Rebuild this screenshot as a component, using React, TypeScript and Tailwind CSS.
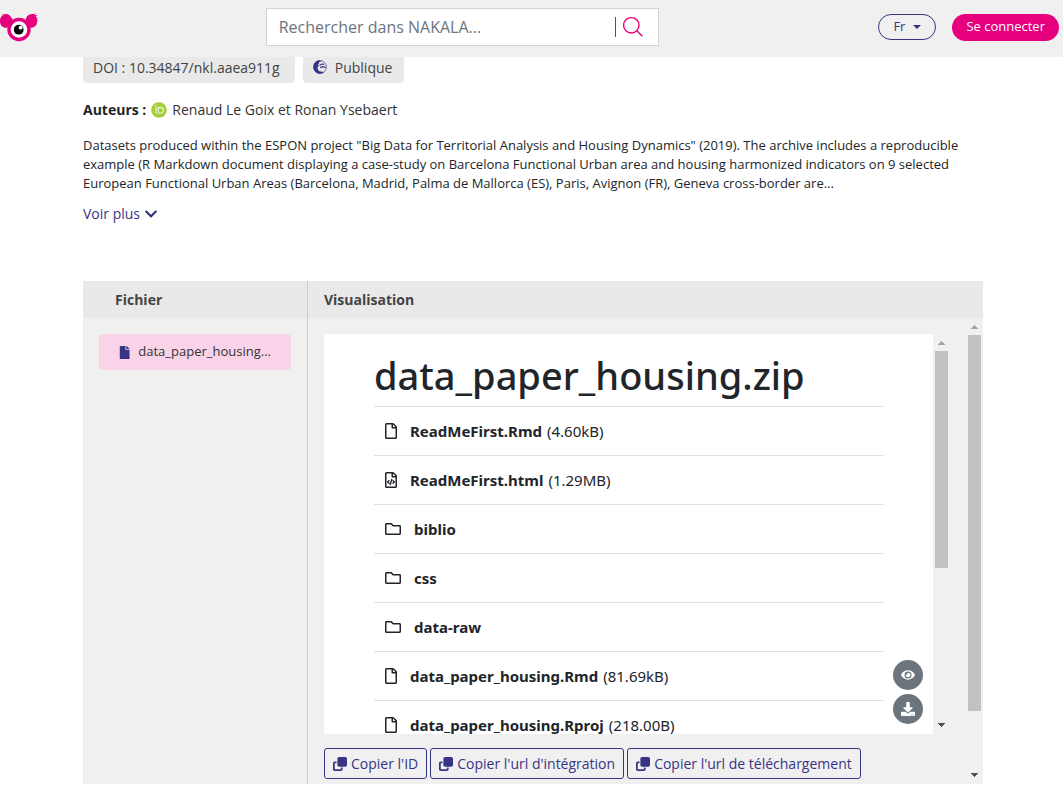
import React from "react";
import { FaFile, FaEye, FaDownload, FaRegFile, FaRegFileCode, FaRegFolder, FaChevronDown, FaOrcid } from "react-icons/fa";
import { FaClone } from "react-icons/fa6";

type Kind = "file" | "code" | "folder";

const entries: { kind: Kind; name: string; size?: string }[] = [
  { kind: "file", name: "ReadMeFirst.Rmd", size: "4.60kB" },
  { kind: "code", name: "ReadMeFirst.html", size: "1.29MB" },
  { kind: "folder", name: "biblio" },
  { kind: "folder", name: "css" },
  { kind: "folder", name: "data-raw" },
  { kind: "file", name: "data_paper_housing.Rmd", size: "81.69kB" },
  { kind: "file", name: "data_paper_housing.Rproj", size: "218.00B" },
];

const icons = {
  file: <FaRegFile className="h-4 w-3 shrink-0" />,
  code: <FaRegFileCode className="h-4 w-3 shrink-0" />,
  folder: <FaRegFolder className="size-4 shrink-0" />,
};

function Logo() {
  return (
    <svg viewBox="0 0 40 30" className="h-[30px] w-10" role="img" aria-label="Nakala">
      <g fill="#e6007e">
        <path d="M0 9C0 5 2 4 3 3L1 3C3 2 5 2 6 2.500L5 1.800C8 2 10 3 11 5C13 7 13 9 12 11C10 15 7 16.500 4 15.500C1 14.500 0 12 0 9Z" />
        <path d="M26 9C25 5 29 1.500 33 2L36 1.500L34.500 3L38 3.500L35.500 4.500L38.500 7L36.500 6.500L38 9.500L36.800 9C38 13 34 16.500 30 15.500C27 14 26 12 26 9Z" />
        <circle cx="19" cy="17.500" r="11.700" />
      </g>
      <circle cx="19" cy="17.500" r="8.300" fill="#fff" />
      <circle cx="18.700" cy="17.700" r="4.900" fill="#0a0a0a" />
      <circle cx="20.600" cy="15.700" r="1.900" fill="#fff" />
    </svg>
  );
}

function Globe() {
  return (
    <svg viewBox="0 0 14 14" className="mt-[3px] size-[14px] shrink-0" aria-hidden="true">
      <circle cx="7" cy="7" r="6.400" fill="#e9e9e9" stroke="#6f6ea3" strokeWidth="1" />
      <path fill="#373583" d="M7 0.300C3.200 0.300 0.400 3.200 0.400 7S3.300 13.700 7 13.700C8.700 13.700 10 13.200 11 12.300L8.600 11.600C6.400 11.700 4.800 10.200 4.600 8.200C4.500 6.800 5.300 6 6 5.500L4.800 4.600L6.300 3.200L5.800 2.200L8.200 1.200Z" />
      <path d="M6.500 5.500l2.300-1.500 2.500 0.300M7 7.700l2.500-1 3 0.700" fill="none" stroke="#373583" strokeWidth="1.200" />
    </svg>
  );
}

function ScrollTrack({ thumb }: { thumb: string }) {
  return (
    <div aria-hidden="true" className="flex w-[17px] shrink-0 flex-col items-center bg-[#f0f0f0]">
      <svg viewBox="0 0 7 4" className="mt-[7px] mb-[6px] h-1 w-[7px] shrink-0" fill="#a3a3a3" shapeRendering="crispEdges">
        <path d="M3 0h1v1h1v1h1v1h1v1H0V3h1V2h1V1h1z" />
      </svg>
      <div className={thumb} />
      <svg viewBox="0 0 7 4" className="mt-auto mb-[7px] h-1 w-[7px] shrink-0" fill="#505050" shapeRendering="crispEdges">
        <path d="M0 0h7v1H6v1H5v1H4v1H3V3H2V2H1V1H0z" />
      </svg>
    </div>
  );
}

export default function App() {
  return (
    <div className="min-h-screen bg-white font-['Open_Sans',sans-serif] text-[#212529]">
      <header className="flex h-[57px] items-center justify-between bg-[#f0f0f0] pr-1 pb-[3px]">
        <a href="#accueil" className="w-[46px]"><Logo /></a>
        <form className="flex h-[38px] w-[393px] items-center border border-[#d4d4d4] bg-white pr-[14px]">
          <input aria-label="Rechercher" placeholder="Rechercher dans NAKALA..." className="min-w-0 flex-1 px-3 text-base outline-none placeholder:text-[#6c757d]" />
          <span className="h-5 w-px bg-[#e6007e]" />
          <button type="button" aria-label="Lancer la recherche" className="ml-[6px]">
            <svg viewBox="0 0 22 22" className="size-[22px]" fill="none" stroke="#e6007e" strokeWidth="1.400">
              <circle cx="9.300" cy="9.300" r="7.700" />
              <path d="M14.800 14.800l5.500 5.500" />
            </svg>
          </button>
        </form>
        <div className="flex items-center gap-4">
          <button className="flex h-[26px] items-center gap-2 rounded-full border border-[#373583] px-[14px] text-[13px] text-[#373583]">
            Fr
            <svg viewBox="0 0 8 4" className="h-1 w-2" fill="currentColor" aria-hidden="true"><path d="M0 0h8L4 4z" /></svg>
          </button>
          <button className="h-[27px] rounded-full bg-[#e6007e] px-[14px] text-[13px] text-white">Se connecter</button>
        </div>
      </header>

      <main className="pr-20 pb-4 pl-[83px]">
        <div className="flex gap-2 text-sm text-[#444]">
          <span className="h-[26px] rounded-b bg-[#e9e9e9] pr-[15px] pl-[10px] leading-[22px]">DOI : 10.34847/nkl.aaea911g</span>
          <span className="flex h-[26px] gap-2 rounded-b bg-[#e9e9e9] pr-3 pl-[10px] leading-[22px]">
            <Globe />
            Publique
          </span>
        </div>
        <p className="mt-4 flex items-center gap-[5px] text-sm leading-[22px]">
          <b>Auteurs :</b>
          <FaOrcid className="size-4 text-[#a6ce39]" />
          <span className="text-[#333]">Renaud Le Goix et Ronan Ysebaert</span>
        </p>
        <p className="mt-[15px] text-[13px] leading-[19px]">
          Datasets produced within the ESPON project "Big Data for Territorial Analysis and Housing Dynamics" (2019). The archive includes a reproducible example (R Markdown document displaying a case-study on Barcelona Functional Urban area and housing harmonized indicators on 9 selected European Functional Urban Areas (Barcelona, Madrid, Palma de Mallorca (ES), Paris, Avignon (FR), Geneva cross-border are...
        </p>
        <button className="mt-[11px] flex items-center gap-1 text-sm leading-5 text-[#373583]">
          Voir plus <FaChevronDown className="size-[14px]" />
        </button>

        <section className="mt-[57px] flex bg-[#f0f0f0]">
          <aside className="w-[225px] shrink-0 border-r border-[#ccc]">
            <h2 className="h-[37px] bg-[#e9e9e9] pl-8 text-sm leading-[37px] font-bold text-[#444]">Fichier</h2>
            <div className="p-4">
              <button className="flex h-9 w-full items-center gap-2 rounded bg-[#fbd3e9] px-5 text-[13px] text-[#333]">
                <FaFile className="h-[13px] w-3 text-[#373583]" />
                data_paper_housing...
              </button>
            </div>
          </aside>
          <div className="min-w-0 flex-1">
            <h2 className="h-[37px] bg-[#e9e9e9] pl-4 text-sm leading-[37px] font-bold text-[#444]">Visualisation</h2>
            <div className="flex h-[466px]">
              <div className="min-w-0 flex-1 px-4 pt-4">
                <div className="flex h-[400px]">
                  <div className="relative min-w-0 flex-1 overflow-hidden bg-white pt-[17px] pr-[49px] pl-[50px] font-['Noto_Sans',sans-serif]">
                    <h1 className="text-[38px] leading-[48px] font-medium">data_paper_housing.zip</h1>
                    <ul className="mt-[7px]">
                      {entries.map((e) => (
                        <li key={e.name} className="flex h-[49px] items-center border-t border-[#dee2e6] pl-[11px] text-[15px]">
                          {icons[e.kind]}
                          <a href={"#" + e.name} className="ml-[13px] font-bold">{e.name}</a>
                          {e.size && <span className="ml-[5px]">({e.size})</span>}
                        </li>
                      ))}
                    </ul>
                    <div className="absolute right-[10px] bottom-[10px] flex flex-col gap-1 text-white">
                      <button aria-label="Voir" className="flex size-[30px] items-center justify-center rounded-full bg-[#6c757d]"><FaEye className="size-[14px]" /></button>
                      <button aria-label="Télécharger" className="flex size-[30px] items-center justify-center rounded-full bg-[#6c757d]"><FaDownload className="size-[14px]" /></button>
                    </div>
                  </div>
                  <ScrollTrack thumb="h-[217px] w-[13px] shrink-0 bg-[#c1c1c1]" />
                </div>
                <div className="mt-[14px] flex gap-[3px] text-sm text-[#373583]">
                  {["Copier l'ID", "Copier l'url d'intégration", "Copier l'url de téléchargement"].map((t) => (
                    <button key={t} className="flex h-[31px] items-center gap-1 rounded-[3px] border border-[#373583] px-2 whitespace-nowrap">
                      <FaClone className="size-[14px]" /> {t}
                    </button>
                  ))}
                </div>
              </div>
              <ScrollTrack thumb="h-[376px] w-[13px] shrink-0 bg-[#c1c1c1]" />
            </div>
          </div>
        </section>
      </main>
    </div>
  );
}
